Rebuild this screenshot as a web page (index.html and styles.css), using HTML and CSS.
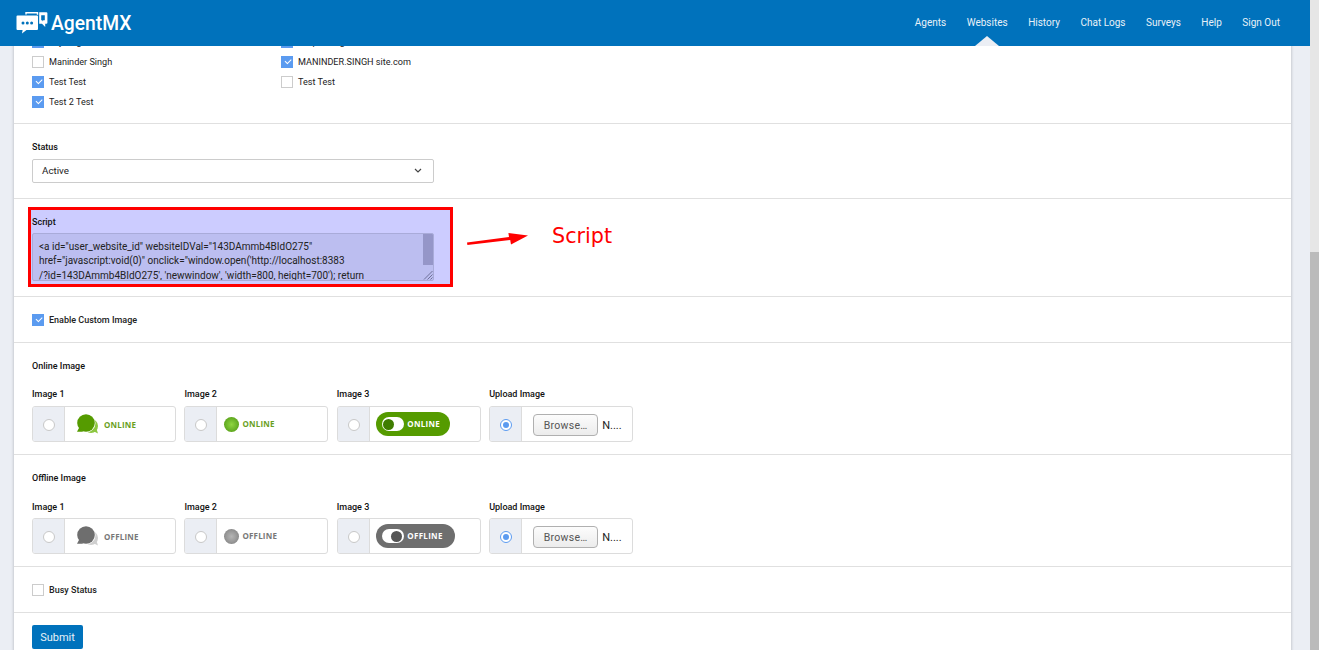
FILE: index.html
```html
<!DOCTYPE html>
<html lang="en">
<head>
    <meta charset="UTF-8">
    <title>AgentMX - Websites</title>
    <link rel="stylesheet" href="styles.css">
</head>
<body>
    <div class="viewport">
        <!-- Fixed top bar -->
        <header class="topbar">
            <a class="brand" href="#">
                <svg class="brand-icon" width="32" height="24" viewBox="0 0 32 24">
                    <path fill="none" stroke="#fff" stroke-width="1.4" d="M10 3.500V1.700h11.500v2"/>
                    <path fill="#fff" d="M1.500 4.500h19.500a1 1 0 0 1 1 1V18a1 1 0 0 1-1 1H10.500L6 22.600 6.600 19H1.500a1 1 0 0 1-1-1V5.500a1 1 0 0 1 1-1z"/>
                    <circle cx="7" cy="12" r="1.500" fill="#0072bc"/>
                    <circle cx="11.300" cy="12" r="1.500" fill="#0072bc"/>
                    <circle cx="15.600" cy="12" r="1.500" fill="#0072bc"/>
                    <path fill="#fff" d="M23.200 1.200h7.200a1 1 0 0 1 1 1v9.600a1 1 0 0 1-1 1h-1.200v3.300l-3.200-3.300h-2.800z"/>
                    <path fill="#0072bc" d="M25.200 4.200h3.600v5h-1.400l-.9 1.200-.1-1.200h-1.200z"/>
                </svg>
                <span>AgentMX</span>
            </a>
            <nav class="nav">
                <a href="#">Agents</a>
                <a href="#" class="active">Websites</a>
                <a href="#">History</a>
                <a href="#">Chat Logs</a>
                <a href="#">Surveys</a>
                <a href="#">Help</a>
                <a href="#">Sign Out</a>
            </nav>
        </header>

        <main class="card">
            <section class="section section-agents">
                <div class="agent-grid">
                    <label class="check-row"><span class="check on"></span>Raj Singh</label>
                    <label class="check-row"><span class="check on"></span>Harpal Singh</label>
                    <label class="check-row"><span class="check"></span>Maninder Singh</label>
                    <label class="check-row"><span class="check on"></span>MANINDER.SINGH site.com</label>
                    <label class="check-row"><span class="check on"></span>Test Test</label>
                    <label class="check-row"><span class="check"></span>Test Test</label>
                    <label class="check-row"><span class="check on"></span>Test 2 Test</label>
                </div>
            </section>

            <section class="section section-status">
                <div class="field-label">Status</div>
                <div class="select-box">
                    <span>Active</span>
                    <svg width="8" height="5" viewBox="0 0 8 5"><path d="M1 1l3 3 3-3" fill="none" stroke="#444" stroke-width="1.200"/></svg>
                </div>
            </section>

            <section class="section section-script">
                <div class="script-box">
                    <div class="field-label">Script</div>
                    <div class="script-code">
                        <div>&lt;a id="user_website_id" websiteIDVal="143DAmmb4BIdO275"</div>
                        <div>href="javascript:void(0)" onclick="window.open('http://localhost:8383</div>
                        <div>/?id=143DAmmb4BIdO275', 'newwindow', 'width=800, height=700'); return</div>
                        <span class="code-thumb"></span>
                        <svg class="code-grip" width="10" height="10" viewBox="0 0 10 10"><path d="M9.500 1L1 9.500M9.500 4.500L4.500 9.500M9.500 7.500L7.500 9.500" stroke="#6f7099" stroke-width="1"/></svg>
                    </div>
                </div>
                <svg class="script-arrow" width="62" height="18" viewBox="0 0 62 18"><path fill="#f00" d="M0 13.400l42-5.400-.6-4L61 6.600 44 15.400l-.8-4.400L.4 16z"/></svg>
                <span class="script-note">Script</span>
            </section>

            <section class="section section-check">
                <label class="check-row strong"><span class="check on"></span>Enable Custom Image</label>
            </section>

            <section class="section section-images">
                <div class="field-label">Online Image</div>
                <div class="image-grid">
                    <div>
                        <div class="field-label">Image 1</div>
                        <div class="image-option">
                            <span class="addon"><span class="radio"></span></span>
                            <span class="option-body pad-bubble">
                                <svg width="22" height="20" viewBox="0 0 22 20"><circle cx="14" cy="12" r="7" fill="#8cc63f"/><path fill="#8cc63f" d="M16 17l5 2.500-2-6z"/><circle cx="9" cy="9" r="9.500" fill="#fff"/><circle cx="9" cy="9" r="8.800" fill="#559b00"/><path fill="#559b00" d="M0 17.800h6L2.500 13z"/></svg>
                                <span class="state-text online">ONLINE</span>
                            </span>
                        </div>
                    </div>
                    <div>
                        <div class="field-label">Image 2</div>
                        <div class="image-option">
                            <span class="addon"><span class="radio"></span></span>
                            <span class="option-body pad-dot">
                                <span class="orb orb-online"></span>
                                <span class="state-text online">ONLINE</span>
                            </span>
                        </div>
                    </div>
                    <div>
                        <div class="field-label">Image 3</div>
                        <div class="image-option">
                            <span class="addon"><span class="radio"></span></span>
                            <span class="option-body pad-pill">
                                <span class="pill pill-online"><span class="toggle"></span>ONLINE</span>
                            </span>
                        </div>
                    </div>
                    <div>
                        <div class="field-label">Upload Image</div>
                        <div class="image-option">
                            <span class="addon"><span class="radio on"></span></span>
                            <span class="option-body pad-upload">
                                <button class="browse" type="button">Browse…</button>
                                <span class="file-name">N....</span>
                            </span>
                        </div>
                    </div>
                </div>
            </section>

            <section class="section section-images offline">
                <div class="field-label">Offline Image</div>
                <div class="image-grid">
                    <div>
                        <div class="field-label">Image 1</div>
                        <div class="image-option">
                            <span class="addon"><span class="radio"></span></span>
                            <span class="option-body pad-bubble">
                                <svg width="22" height="20" viewBox="0 0 22 20"><circle cx="14" cy="12" r="7" fill="#cfcfcf"/><path fill="#cfcfcf" d="M16 17l5 2.500-2-6z"/><circle cx="9" cy="9" r="9.500" fill="#fff"/><circle cx="9" cy="9" r="8.800" fill="#6e6e6e"/><path fill="#6e6e6e" d="M0 17.800h6L2.500 13z"/></svg>
                                <span class="state-text">OFFLINE</span>
                            </span>
                        </div>
                    </div>
                    <div>
                        <div class="field-label">Image 2</div>
                        <div class="image-option">
                            <span class="addon"><span class="radio"></span></span>
                            <span class="option-body pad-dot">
                                <span class="orb orb-offline"></span>
                                <span class="state-text">OFFLINE</span>
                            </span>
                        </div>
                    </div>
                    <div>
                        <div class="field-label">Image 3</div>
                        <div class="image-option">
                            <span class="addon"><span class="radio"></span></span>
                            <span class="option-body pad-pill">
                                <span class="pill pill-offline"><span class="toggle"></span>OFFLINE</span>
                            </span>
                        </div>
                    </div>
                    <div>
                        <div class="field-label">Upload Image</div>
                        <div class="image-option">
                            <span class="addon"><span class="radio on"></span></span>
                            <span class="option-body pad-upload">
                                <button class="browse" type="button">Browse…</button>
                                <span class="file-name">N....</span>
                            </span>
                        </div>
                    </div>
                </div>
            </section>

            <section class="section section-check">
                <label class="check-row strong"><span class="check"></span>Busy Status</label>
            </section>

            <section class="section section-submit">
                <button class="submit" type="button">Submit</button>
            </section>
        </main>
    </div>
    <div class="scrollbar"><span class="scroll-thumb"></span></div>
</body>
</html>
```

FILE: styles.css
```css
html, body {
    height: 100%;
    margin: 0;
    overflow: hidden;
}
body {
    display: flex;
    font-family: Roboto, "Liberation Sans", sans-serif;
    font-size: 9.1px;
    color: #222;
    background-color: #ebeef4;
}
.viewport {
    position: relative;
    flex: 1;
    height: 650px;
    overflow: hidden;
}
/* Top bar */
.topbar {
    position: absolute;
    top: 0;
    left: 0;
    right: 0;
    z-index: 2;
    height: 46px;
    display: flex;
    justify-content: space-between;
    align-items: center;
    padding: 0 30px 0 16px;
    background-color: #0072bc;
}
.brand {
    display: flex;
    align-items: center;
    gap: 3px;
    color: #fff;
    font-size: 19.3px;
    font-weight: 500;
    text-decoration: none;
}
.nav {
    display: flex;
    gap: 20.5px;
}
.nav a {
    position: relative;
    color: #e8f1f8;
    font-size: 10px;
    line-height: 46px;
    text-decoration: none;
}
.nav a.active::after {
    content: "";
    position: absolute;
    left: 50%;
    bottom: 0;
    margin-left: -12px;
    border-left: 12px solid transparent;
    border-right: 12px solid transparent;
    border-bottom: 10px solid #ebeef4;
}
/* Card and sections */
.card {
    margin: 0 19px 0 14px;
    background-color: #fff;
    box-shadow: 0 0 3px rgba(0, 0, 0, 0.25);
}
.section {
    padding: 0 18px;
    border-bottom: 1px solid #e0e0e0;
}
.section-agents {
    padding-top: 32px;
    padding-bottom: 11px;
}
.agent-grid {
    display: grid;
    grid-template-columns: 249px 1fr;
    grid-auto-rows: 20px;
}
.check-row {
    display: flex;
    align-items: center;
    gap: 5px;
}
.check-row.strong {
    font-weight: 500;
    font-size: 9px;
}
.check {
    box-sizing: border-box;
    position: relative;
    width: 12px;
    height: 12px;
    background-color: #fff;
    border: 1px solid #ccc;
}
.check.on {
    background-color: #5b9bf0;
    border-color: #5b9bf0;
}
.check.on::after {
    content: "";
    position: absolute;
    left: 2.500px;
    top: 2px;
    width: 4.500px;
    height: 2.500px;
    border-left: 1.300px solid #fff;
    border-bottom: 1.300px solid #fff;
    transform: rotate(-45deg);
}
.field-label {
    font-size: 9px;
    font-weight: 500;
    line-height: 16px;
    color: #111;
}
.section-status {
    padding-top: 15px;
    padding-bottom: 15px;
}
.select-box {
    box-sizing: border-box;
    display: flex;
    justify-content: space-between;
    align-items: center;
    width: 402px;
    height: 24px;
    margin-top: 4px;
    padding: 0 11px 1px 9px;
    font-size: 9.8px;
    border: 1px solid #ccc;
    border-radius: 2px;
}
/* Highlighted script block */
.section-script {
    display: flex;
    align-items: flex-start;
    padding: 8px 0 9px 14px;
}
.script-box {
    box-sizing: border-box;
    width: 425px;
    height: 80px;
    padding: 3px 16px 3px 1px;
    background-color: #ccccff;
    border: 3px solid #f00;
}
.script-box .field-label {
    line-height: 19px;
    margin-bottom: 1px;
}
.script-code {
    box-sizing: border-box;
    position: relative;
    height: 48px;
    padding: 5.500px 0 0 6px;
    overflow: hidden;
    font-size: 10px;
    line-height: 14.700px;
    white-space: nowrap;
    background-color: #bcbef0;
    border: 1px solid #a9abd9;
    border-radius: 2px;
}
.code-thumb {
    position: absolute;
    top: 0;
    right: 0;
    width: 10px;
    height: 31px;
    background-color: #9596c8;
}
.code-grip {
    position: absolute;
    right: 0;
    bottom: 0;
}
.script-arrow {
    margin: 22px 0 0 14px;
}
.script-note {
    margin: 16px 0 0 23px;
    font-family: "DejaVu Sans", sans-serif;
    font-size: 20.700px;
    line-height: 26px;
    color: #f00;
}
.section-check {
    padding-top: 13px;
    padding-bottom: 12px;
    height: 20px;
}
.section-check .check-row {
    height: 20px;
}
/* Online / offline image pickers */
.section-images {
    padding-top: 15px;
    padding-bottom: 12px;
}
.image-grid {
    display: flex;
    gap: 8.400px;
    margin-top: 12px;
}
.image-grid > div {
    width: 144px;
}
.image-grid .field-label {
    margin-bottom: 4px;
}
.offline .image-grid {
    margin-top: 13px;
}
.offline .image-grid .field-label {
    margin-bottom: 3px;
}
.image-option {
    box-sizing: border-box;
    display: flex;
    height: 36px;
    border: 1px solid #dcdcdc;
    border-radius: 3px;
    overflow: hidden;
}
.addon {
    box-sizing: border-box;
    display: flex;
    justify-content: center;
    align-items: center;
    width: 32px;
    padding-left: 1px;
    background-color: #ebeef4;
    border-right: 1px solid #dcdcdc;
}
.radio {
    box-sizing: border-box;
    position: relative;
    width: 12px;
    height: 12px;
    margin-top: 2px;
    background-color: #fff;
    border: 1px solid #c8c8c8;
    border-radius: 50%;
}
.radio.on {
    border-color: #5b9bf0;
}
.radio.on::after {
    content: "";
    position: absolute;
    inset: 2px;
    background-color: #5b9bf0;
    border-radius: 50%;
}
.option-body {
    display: flex;
    align-items: center;
    flex: 1;
}
.pad-bubble { padding-left: 12px; gap: 5px; }
.pad-dot { padding-left: 7px; gap: 3px; }
.pad-dot .state-text { margin-bottom: 1px; }
.pad-pill { padding-left: 6px; }
.pad-upload { padding-left: 11px; gap: 4px; }
.state-text {
    font-family: "Open Sans", sans-serif;
    font-size: 8px;
    font-weight: 700;
    letter-spacing: 0.2px;
    color: #777;
}
.state-text.online {
    color: #6a9f1e;
}
.orb {
    width: 15px;
    height: 15px;
    border-radius: 50%;
}
.orb-online {
    background: radial-gradient(circle, #8fd63f 0%, #6cb52a 50%, #4c9208 100%);
}
.orb-offline {
    background: radial-gradient(circle, #b5b5b5 0%, #999 50%, #777 100%);
}
.pill {
    box-sizing: border-box;
    display: flex;
    align-items: center;
    gap: 3.500px;
    height: 24px;
    padding: 0 10px 2px 6px;
    font-family: "Open Sans", sans-serif;
    font-size: 8px;
    font-weight: 700;
    letter-spacing: 0.3px;
    color: #fff;
    border-radius: 12px;
}
.pill-online { background-color: #559b00; }
.pill-offline { background-color: #6e6e6e; padding-right: 12px; }
.toggle {
    position: relative;
    width: 22px;
    height: 14px;
    margin-top: 2px;
    background-color: #fff;
    border-radius: 7px;
}
.toggle::after {
    content: "";
    position: absolute;
    top: 1.500px;
    width: 11px;
    height: 11px;
    border-radius: 50%;
}
.pill-online .toggle::after {
    left: 1.500px;
    background-color: #3f7d00;
}
.pill-offline .toggle::after {
    right: 1.500px;
    background-color: #555;
}
.browse {
    width: 65px;
    height: 22px;
    margin-top: 2px;
    padding: 0;
    font-family: Roboto, sans-serif;
    font-size: 10.500px;
    letter-spacing: 0.3px;
    color: #555;
    background: linear-gradient(#fcfcfc, #ececec);
    border: 1px solid #b0b0b0;
    border-radius: 4px;
}
.file-name {
    margin-top: 2px;
    font-size: 11px;
    color: #222;
}
.section-submit {
    padding-top: 12px;
    padding-bottom: 20px;
    border-bottom: 0;
}
.submit {
    width: 51px;
    height: 24px;
    padding: 0;
    font-family: Roboto, sans-serif;
    font-size: 11px;
    color: #e8f1f8;
    background-color: #0072bc;
    border: 0;
    border-radius: 2px;
}
/* Page scrollbar */
.scrollbar {
    width: 9px;
    height: 650px;
    background-color: #e6e6e6;
}
.scroll-thumb {
    display: block;
    height: 398px;
    margin-top: 252px;
    background-color: #bbb;
}
```
